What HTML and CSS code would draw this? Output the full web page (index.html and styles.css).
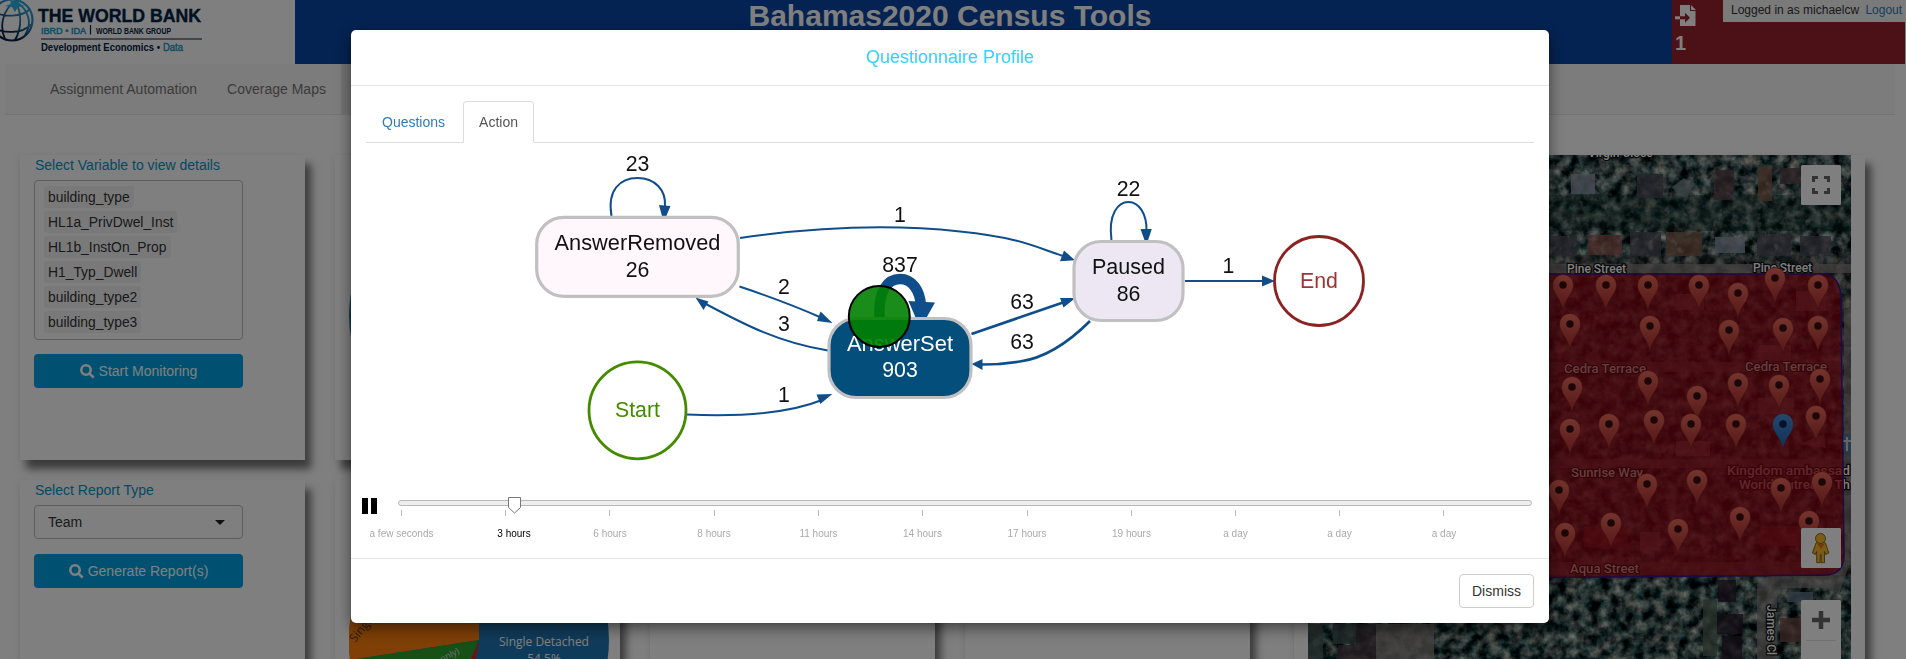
FILE: index.html
```html
<!DOCTYPE html>
<html lang="en">
<head>
<meta charset="utf-8">
<title>Bahamas2020 Census Tools</title>
<link rel="stylesheet" href="styles.css">
</head>
<body>
<div class="page">
  <header class="header">
    <div class="logo">
      <svg width="295" height="64" viewBox="0 0 295 64">
        <defs><linearGradient id="globe" x1="1" y1="0" x2="0.3" y2="1"><stop offset="0" stop-color="#2bb5ea"/><stop offset=".45" stop-color="#2a80b0"/><stop offset=".8" stop-color="#002244"/></linearGradient></defs>
        <g fill="none" stroke="url(#globe)" stroke-width="1.8">
          <circle cx="12" cy="20" r="20.5" stroke-width="2.2"/>
          <path d="M15 1C3 10 -1 26 5 39M15 1C22 12 22 28 15 40M15 1C30 10 32 24 25 35M-8 11C4 18 22 17 30 9M-8 27C4 34 22 34 32 24"/>
        </g>
        <path d="M10 -1l5 4 5-4 -1 5 6 2-7 1-3 5-3-5-7-1 6-2z" fill="#2bb5ea"/>
        <text class="wb-name" x="38" y="22" textLength="163" lengthAdjust="spacingAndGlyphs">THE WORLD BANK</text>
        <text class="wb-ibrd" x="41" y="33.5" textLength="45" lengthAdjust="spacingAndGlyphs">IBRD • IDA</text>
        <path d="M90.500 25v9.500" stroke="#002244" stroke-width="1.200"/>
        <text class="wb-group" x="96" y="33.5" textLength="75" lengthAdjust="spacingAndGlyphs">WORLD BANK GROUP</text>
        <path d="M41 39h161" stroke="#56657f" stroke-width="1.500"/>
        <text class="wb-dec" x="41" y="50.500" textLength="119" lengthAdjust="spacingAndGlyphs">Development Economics •</text>
        <text class="wb-data" x="163" y="50.500" textLength="20" lengthAdjust="spacingAndGlyphs">Data</text>
      </svg>
    </div>
    <h1 class="title">Bahamas2020 Census Tools</h1>
    <div class="status">
      <div class="export">
        <svg width="21" height="21" viewBox="0 0 21 21">
          <path d="M5 0h10v6h5.500v15H5z" fill="#fff"/><path d="M16 0l5 5h-5z" fill="#fff"/>
          <path d="M0 11.300h5v3H0z" fill="#fff"/><path d="M5 11.300h5v-3.500l5 5-5 5v-3.500H5z" fill="#98222c"/>
        </svg>
        <b>1</b>
      </div>
      <div class="login">Logged in as michaelcw <a>Logout</a></div>
    </div>
  </header>
  <nav class="nav"><a>Assignment Automation</a><a>Coverage Maps</a><a class="current">Monitoring</a></nav>
  <main class="main">
    <div class="col col-form">
      <section class="panel tall">
        <label>Select Variable to view details</label>
        <div class="tags"><span>building_type</span><span>HL1a_PrivDwel_Inst</span><span>HL1b_InstOn_Prop</span><span>H1_Typ_Dwell</span><span>building_type2</span><span>building_type3</span></div>
        <button class="go"><svg width="15" height="15" viewBox="0 0 15 15"><circle cx="6" cy="6" r="4.700"/><path d="M9.500 9.500l4.200 4.200"/></svg>Start Monitoring</button>
      </section>
      <section class="panel low">
        <label>Select Report Type</label>
        <div class="select">Team<i></i></div>
        <button class="go"><svg width="15" height="15" viewBox="0 0 15 15"><circle cx="6" cy="6" r="4.700"/><path d="M9.500 9.500l4.200 4.200"/></svg>Generate Report(s)</button>
      </section>
    </div>
    <div class="col">
      <section class="panel tall chart"><svg width="260" height="260" viewBox="-130 -130 260 260"><circle r="130" fill="#1f77b4"/></svg></section>
      <section class="panel low chart">
        <svg width="260" height="260" viewBox="-130 -130 260 260">
          <circle r="130" fill="#1f77b4"/>
          <path d="M0 0V-130A130 130 0 0 0 -129 20z" fill="#ff7f0e"/>
          <path d="M0 0L-129 20A130 130 0 0 0 -50 120z" fill="#2ca02c"/>
          <path d="M0 0L-50 120H-20z" fill="#d62728"/>
          <text class="slice" x="65" y="6">Single Detached</text><text class="slice" x="65" y="23">54.5%</text>
          <text class="slice dark" transform="translate(-124 3) rotate(-51)">Single Attached</text>
          <text class="slice tiny" transform="translate(-19 13) rotate(-27)">(flats only)</text>
        </svg>
      </section>
    </div>
    <div class="col"><section class="panel tall"></section><section class="panel low"></section></div>
    <div class="col"><section class="panel tall"></section><section class="panel low"></section></div>
    <div class="col col-map">
      <section class="panel map">
        <svg width="543" height="504" viewBox="1308 155 543 504">
          <defs>
            <filter id="terrain" x="0" y="0" width="100%" height="100%" color-interpolation-filters="sRGB"><feTurbulence type="fractalNoise" baseFrequency=".09" numOctaves="4" seed="8"/><feColorMatrix values="1.500 0 0 0 -.50  1.350 .2 0 0 -.44  1.250 .2 0 0 -.40  0 0 0 0 1"/></filter>
            <filter id="rough" x="0" y="0" width="100%" height="100%" color-interpolation-filters="sRGB"><feTurbulence type="fractalNoise" baseFrequency=".11" numOctaves="3" seed="3"/><feColorMatrix values="0 0 0 0 .66  0 0 0 0 .6  0 0 0 0 .62  5 0 0 0 -2.900"/></filter>
            <linearGradient id="red" x1="0" y1="0" x2="0" y2="1"><stop offset="0" stop-color="#eb6a5c"/><stop offset="1" stop-color="#a82c2c"/></linearGradient>
            <linearGradient id="blue" x1="0" y1="0" x2="0" y2="1"><stop offset="0" stop-color="#4b8fd8"/><stop offset="1" stop-color="#1d61b0"/></linearGradient>
            <path id="pin" d="M0-10.500A10.500 10.500 0 0 1 10.500 0C10.500 9 2.500 12 0 26C-2.500 12-10.500 9-10.500 0A10.500 10.500 0 0 1 0-10.500z"/>
          </defs>
          <rect x="1308" y="155" width="543" height="504" filter="url(#terrain)"/>
          <rect x="1549" y="195" width="302" height="36" fill="#123028" opacity=".4"/>
          <rect x="1549" y="255" width="302" height="322" fill="#50403f" opacity=".3"/>
          <g fill="#847c7c">
            <path d="M1549 264h302v9h-302z" opacity=".75"/><path d="M1549 362h294v10h-294zM1549 459h294v9h-294zM1549 562h294v13h-294z" opacity=".6"/>
            <path d="M1844 310h7v250h-7z" opacity=".7"/><path d="M1757 585q6-9 15-9h58l18-24 3 8-12 34-12-6h-42q-8 0-8 12v59h-20z" opacity=".7"/>
          </g>
          <g opacity=".8">
            <path d="M1571 174h24v20h-24zM1715 237h30v16h-30z" fill="#8c98a8"/>
            <path d="M1588 235h34v20h-34z" fill="#8c504a"/><path d="M1666 232h36v24h-36zM1758 166h14v35h-14z" fill="#7f5a49"/>
            <path d="M1630 232h31v24h-31zM1757 234h34v22h-34zM1800 236h31v20h-31zM1637 174h26v24h-26zM1549 236h28v20h-28z" fill="#4c4b58"/>
            <path d="M1714 170h20v30h-20zM1780 168h22v16h-22z" fill="#584348"/><path d="M1672 187l12-9 9 8-6 12-10-4z" fill="#75878c"/>
            <path d="M1718 580h18v22h-18zM1717 614h26v20h-26zM1722 636h20v23h-20z" fill="#281d2c"/><path d="M1703 600h14v56h-14z" fill="#526356"/><path d="M1780 618h21v24h-21z" fill="#744a49"/><path d="M1787 592h26v10h-26z" fill="#68798c"/>
            <path d="M1308 624h15v35h-15zM1333 624h23v20h-23z" fill="#445855"/><path d="M1356 624h20v35h-38v-14h18z" fill="#493843"/><path d="M1376 624h58v35h-58z" fill="#8a8480"/>
          </g>
          <g fill="#a88" opacity=".7"><path d="M1676 294h28v16h-28zM1796 291h30v20h-30zM1759 345h32v16h-32zM1758 398h36v16h-36zM1676 441h34v15h-34zM1640 532h20v19h-20z"/><path d="M1800 444l24-10 2 14z"/></g>
          <path d="M1584 527h44v20h-44zM1760 526h62v20h-62z" fill="#a04040" opacity=".6"/>
          <rect x="1549" y="155" width="302" height="420" filter="url(#rough)" opacity=".45"/>
          <g class="road"><text x="1588" y="157">Virgin Close</text><text x="1567" y="273">Pine Street</text><text x="1753" y="272">Pine Street</text><text x="1727" y="475" textLength="123" lengthAdjust="spacingAndGlyphs">Kingdom ambassad</text><text x="1739" y="489" textLength="111" lengthAdjust="spacingAndGlyphs">World Outreach Th</text><text transform="translate(1767 605) rotate(90)">James Cl</text></g>
          <path d="M1843 437a8 8 0 0 1 10-3v26h-2l-5-9q-8-6-3-14z" fill="#517795"/><path d="M1847 437v14M1843 441h8" stroke="#ccc" stroke-width="2"/>
          <path d="M1500 274H1827Q1841 279 1841 299L1844 555Q1844 575 1824 575L1500 578z" fill="#a00010" fill-opacity=".7" stroke="#3a1288" stroke-width="1.500"/>
          <g class="street"><text x="1564" y="373" textLength="82" lengthAdjust="spacingAndGlyphs">Cedra Terrace</text><text x="1745" y="371" textLength="82" lengthAdjust="spacingAndGlyphs">Cedra Terrace</text><text x="1571" y="477" textLength="72" lengthAdjust="spacingAndGlyphs">Sunrise Way</text><text x="1570" y="573" textLength="69" lengthAdjust="spacingAndGlyphs">Aqua Street</text></g>
          <g class="pins" fill="url(#red)">
            <use href="#pin" x="1563" y="285"/><use href="#pin" x="1606" y="285"/><use href="#pin" x="1648" y="285"/><use href="#pin" x="1699" y="285"/><use href="#pin" x="1738" y="293"/><use href="#pin" x="1775" y="278"/><use href="#pin" x="1818" y="285"/>
            <use href="#pin" x="1570" y="324"/><use href="#pin" x="1650" y="326"/><use href="#pin" x="1729" y="330"/><use href="#pin" x="1783" y="328"/><use href="#pin" x="1818" y="326"/>
            <use href="#pin" x="1572" y="387"/><use href="#pin" x="1648" y="381"/><use href="#pin" x="1697" y="396"/><use href="#pin" x="1738" y="383"/><use href="#pin" x="1779" y="385"/><use href="#pin" x="1820" y="379"/>
            <use href="#pin" x="1570" y="429"/><use href="#pin" x="1609" y="424"/><use href="#pin" x="1654" y="420"/><use href="#pin" x="1691" y="424"/><use href="#pin" x="1736" y="424"/><use href="#pin" x="1816" y="416"/>
            <use href="#pin" x="1559" y="490"/><use href="#pin" x="1647" y="484"/><use href="#pin" x="1697" y="480"/><use href="#pin" x="1781" y="488"/><use href="#pin" x="1822" y="482"/>
            <use href="#pin" x="1565" y="533"/><use href="#pin" x="1611" y="523"/><use href="#pin" x="1678" y="529"/><use href="#pin" x="1740" y="517"/><use href="#pin" x="1809" y="521"/>
            <use href="#pin" x="1783" y="424" fill="url(#blue)"/>
          </g>
          <path class="holes" d="M1563 285h0M1606 285h0M1648 285h0M1699 285h0M1738 293h0M1775 278h0M1818 285h0M1570 324h0M1650 326h0M1729 330h0M1783 328h0M1818 326h0M1572 387h0M1648 381h0M1697 396h0M1738 383h0M1779 385h0M1820 379h0M1570 429h0M1609 424h0M1654 420h0M1691 424h0M1736 424h0M1816 416h0M1559 490h0M1647 484h0M1697 480h0M1781 488h0M1822 482h0M1565 533h0M1611 523h0M1678 529h0M1740 517h0M1809 521h0"/><path class="holes navy" d="M1783 424h0"/>
          <g fill="#fff"><rect x="1801" y="165" width="40" height="40" rx="1.500"/><rect x="1801" y="528" width="40" height="40" rx="1.500"/><rect x="1801" y="600" width="40" height="70" rx="1.500"/></g>
          <path d="M1813.500 182v-4.500h4.500M1824 177.500h4.500v4.500M1828.500 188v4.500h-4.500M1818 192.500h-4.500V188" fill="none" stroke="#666" stroke-width="3"/>
          <path d="M1812 620h18M1821 611v18" stroke="#666" stroke-width="4.500"/><path d="M1806 640.500h30" stroke="#e0e0e0"/>
          <g fill="#f6b62c" stroke="#7d5a17" stroke-width=".9"><path d="M1816 543q4.500-2.500 9.500 0l3.300 10-3 1.500-1.300-3v11.200h-3.300v-8h-1v8h-3.500v-11.200l-1.300 3-3-1.500z"/><circle cx="1820.500" cy="538.500" r="5"/></g><path d="M1817.500 544h7l-3.500 5z" fill="#d8771c"/>
        </svg>
      </section>
    </div>
  </main>
</div>

<div class="backdrop">
  <div class="modal">
    <div class="modal-head">Questionnaire Profile</div>
    <div class="modal-body">
      <div class="tabs"><a>Questions</a><a class="active">Action</a></div>
      <svg class="graph" width="1168" height="345" viewBox="366 143 1168 345">
        <g class="edge">
          <path d="M611.500 216C607 190 620 178 637.500 178S666 190 665 206"/>
          <path d="M740 238C830 225 900 225 960 231.500S1030 245 1063 256"/>
          <path d="M739.500 286.500C765 295 795 306 822 318"/>
          <path d="M828 350.500C780 343 745 325 704 303"/>
          <path d="M687 414.500C745 417 790 413 822 400"/>
          <path d="M1111.500 240C1108 214 1118 202 1128.500 202S1147 214 1146.500 231"/>
          <path d="M1185 281H1264"/>
          <path d="M971.500 334L1063 302.500" stroke-width="2.700"/>
          <path d="M1090 321C1067 344 1045 358 1020 361.500Q1002 364.500 982 364.500" stroke-width="2.700"/>
          <path d="M879.500 318C878 290 888 279 900 279S920 290 921 306" stroke-width="10.500"/>
        </g>
        <path class="tips" d="M659 205l11.500 1-5 12h-3zM1064 250.500l11 9.700-15 1zM820.500 311.500l12 11.500-15.500-2zM695.500 297.500l13 4-5 8.500zM816.500 394.500l15.800-.5-12 10zM1140.500 229l11.300 0-4 12h-3zM1262 275.500l13 5.500-13 5.500zM1060 298l15.500 0-12 9.500zM971.500 364l11-5v11zM908.500 301l26.500 1.500-9 16h-10z"/>
        <g class="box">
          <rect x="536.700" y="217.300" width="201.600" height="79" rx="27" fill="#fff7fb"/>
          <rect x="829" y="318.500" width="142" height="79" rx="27" fill="#034e7b"/>
          <rect x="1074" y="241.500" width="109" height="79" rx="27" fill="#ece7f2"/>
        </g>
        <circle cx="637.500" cy="410.300" r="48.500" class="start"/><circle cx="1319" cy="281" r="44.500" class="end"/>
        <g class="words">
          <text x="637.500" y="250" textLength="166" lengthAdjust="spacingAndGlyphs">AnswerRemoved</text><text x="637.500" y="276.500">26</text><text x="637.500" y="171">23</text>
          <text x="900" y="222">1</text><text x="784" y="294">2</text><text x="784" y="331">3</text><text x="784" y="402">1</text><text x="900" y="271.500">837</text>
          <g fill="#fff"><text x="900" y="351" textLength="106" lengthAdjust="spacingAndGlyphs">AnswerSet</text><text x="900" y="377">903</text></g>
          <text x="1128.500" y="274" textLength="73" lengthAdjust="spacingAndGlyphs">Paused</text><text x="1128.500" y="300.500">86</text><text x="1128.500" y="196">22</text>
          <text x="1022" y="309">63</text><text x="1022" y="348.500">63</text><text x="1228.500" y="273">1</text>
          <text x="637.500" y="416.700" fill="#458b00">Start</text><text x="1319" y="288" fill="#a03434">End</text>
        </g>
        <circle cx="879.300" cy="316.400" r="30.500" fill="#008000" fill-opacity=".9" stroke="#000" stroke-width="2"/>
      </svg>
      <svg class="timeline" width="1176" height="70" viewBox="358 488 1176 70">
        <path d="M362 498h6v16h-6zM371 498h6v16h-6z"/>
        <rect x="398.500" y="500.500" width="1133" height="5" rx="2.500" fill="#eee" stroke="#b8b8b8"/>
        <path class="ticks" d="M401.500 510v6M505.500 510v6M609.500 510v6M714.500 510v6M818.500 510v6M922.500 510v6M1027.500 510v6M1131.500 510v6M1235.500 510v6M1339.500 510v6M1443.500 510v6"/>
        <path d="M508.500 497.500h12v10l-6 5.500-6-5.500z" fill="#fff" stroke="#777"/>
        <g class="times"><text x="401.500" y="537">a few seconds</text><text x="514" y="537" fill="#000">3 hours</text><text x="610" y="537">6 hours</text><text x="714" y="537">8 hours</text><text x="818.500" y="537">11 hours</text><text x="922.500" y="537">14 hours</text><text x="1027" y="537">17 hours</text><text x="1131.500" y="537">19 hours</text><text x="1235.500" y="537">a day</text><text x="1339.500" y="537">a day</text><text x="1444" y="537">a day</text></g>
      </svg>
    </div>
    <div class="modal-foot"><button class="dismiss">Dismiss</button></div>
  </div>
</div>
</body>
</html>
```

FILE: styles.css
```css
* { box-sizing: border-box; }
body { margin: 0; height: 659px; overflow: hidden; background: #fff; font: 14px/20px "Liberation Sans", Arial, sans-serif; color: #333; }
svg { display: block; flex: none; }
.page { height: 659px; padding-right: 1px; overflow: hidden; background: #fefefe; }
.header { display: flex; height: 64px; background: #0a46a4; }
.logo { width: 295px; background: #fff; }
.wb-name { font-size: 19px; font-weight: bold; fill: #002244; stroke: #002244; stroke-width: .4px; }
.wb-ibrd { font-size: 9.5px; fill: #2499c9; stroke: #2499c9; stroke-width: .5px; }
.wb-group { font-size: 8.5px; font-weight: bold; fill: #002244; }
.wb-dec { font-size: 10px; font-weight: bold; fill: #002244; }
.wb-data { font-size: 10px; fill: #2499c9; stroke: #2499c9; stroke-width: .4px; }
.title { flex: 1; margin: 0; padding-right: 67px; text-align: center; font-size: 30px; line-height: 31px; font-weight: bold; color: #fff; }
.status { display: flex; justify-content: space-between; width: 233px; background: #98222c; }
.export { padding: 5px 0 0 3px; color: #fff; }
.export b { display: block; padding-top: 4px; font-size: 20px; line-height: 26px; }
.login { width: 182px; height: 22px; padding: 0 0 0 8px; background: #f5f5f5; font-size: 12px; line-height: 20px; white-space: nowrap; }
.login a { padding-left: 3px; color: #337ab7; }
.nav { display: flex; height: 51px; margin: 0 10px 0 5px; padding-left: 30px; background: #f8f8f8; border-bottom: 1px solid #e7e7e7; }
.nav a { padding: 15px; color: #777; font-size: 14px; line-height: 20px; white-space: nowrap; }
.nav .current { background: #e7e7e7; }
.main { display: flex; gap: 30px; padding: 40px 40px 0 20px; }
.col { display: flex; flex-direction: column; gap: 20px; width: 285px; flex: none; }
.col-map { width: 571px; margin-left: 14px; }
.panel { background: #fff; box-shadow: 6px 9px 8px 0 #777, -3px 0 5px #f6f6f6; padding: 0 14px; }
.tall { height: 305px; }
.low { height: 330px; }
.panel label { display: block; padding-left: 1px; line-height: 20px; color: #0a92c6; font-size: 14px; }
.tags { display: flex; flex-direction: column; align-items: flex-start; gap: 3px; height: 160px; margin-top: 5px; padding: 5px 9px; border: 1px solid #bbb; border-radius: 4px; width: 209px; }
.tags span { height: 22px; padding: 0 4px; background: #f2f2f2; border-radius: 3px; line-height: 22px; font-size: 13.85px; }
.go { display: flex; align-items: center; justify-content: center; gap: 4px; width: 209px; height: 34px; margin-top: 14px; padding: 0; border: 0; border-radius: 4px; background: #00a3e2; color: #fff; font: 14px/20px "Liberation Sans", Arial, sans-serif; }
.go svg { fill: none; stroke: #fff; stroke-width: 2.6; }
.select { display: flex; align-items: center; justify-content: space-between; width: 209px; height: 34px; margin-top: 5px; padding: 0 17px 0 13px; border: 1px solid #bbb; border-radius: 4px; }
.select i { border: 5px solid transparent; border-top-color: #222; border-bottom: 0; }
.low .go { margin-top: 15px; }
.chart { padding-top: 30px; }
.slice { font: 12px "Open Sans", sans-serif; fill: #fff; text-anchor: middle; }
.slice.dark { fill: #5a3814; text-anchor: start; }
.slice.tiny { font-size: 9px; text-anchor: end; fill: #ddd; }
.map { height: 560px; }
.road text { font: 500 12px Roboto, sans-serif; fill: #fff; stroke: #111; stroke-width: 2.5px; paint-order: stroke; }
.street text { font: 500 12px Roboto, sans-serif; fill: #d27a78; stroke: #5c0810; stroke-width: 2px; paint-order: stroke; }
.pins { stroke: #7e1c1c; stroke-width: .6; }
.holes { stroke: #380c10; stroke-width: 7.5; stroke-linecap: round; }
.holes.navy { stroke: #0c2450; }
.backdrop { position: fixed; inset: 0; padding-top: 30px; background: rgba(0, 0, 0, .5); }
.modal { width: 1198px; height: 593px; margin-left: 351px; background: #fff; border-radius: 5px; box-shadow: 0 5px 15px rgba(0, 0, 0, .5), 0 0 1px rgba(0, 0, 0, .5); }
.modal-head { height: 56px; padding: 15px 0; border-bottom: 1px solid #e5e5e5; text-align: center; font-size: 18px; line-height: 25px; color: #35d0ff; }
.modal-body { height: 472px; padding: 15px 15px 0; }
.tabs { display: flex; height: 42px; border-bottom: 1px solid #ddd; }
.tabs a { height: 42px; margin-right: 2px; padding: 10px 15px; border: 1px solid transparent; border-radius: 4px 4px 0 0; color: #337ab7; line-height: 20px; }
.tabs .active { border-color: #ddd; border-bottom-color: #fff; color: #555; }
.edge { fill: none; stroke: #104e8b; stroke-width: 2; }
.tips { fill: #104e8b; }
.box { stroke: #c0c0c0; stroke-width: 3.2; }
.start, .end { fill: #fff; stroke: #458b00; stroke-width: 2.8; }
.end { stroke: #8b2323; }
.words { font-size: 21.3px; text-anchor: middle; fill: #111; }
.timeline { margin-left: -8px; }
.ticks { stroke: #bbb; }
.times { font-size: 10px; fill: #aaa; text-anchor: middle; }
.modal-foot { display: flex; justify-content: flex-end; height: 65px; padding: 15px; border-top: 1px solid #e5e5e5; }
.dismiss { width: 75px; height: 34px; padding: 0; border: 1px solid #ccc; border-radius: 4px; background: #fff; color: #333; font: 14px/20px "Liberation Sans", Arial, sans-serif; }
```
